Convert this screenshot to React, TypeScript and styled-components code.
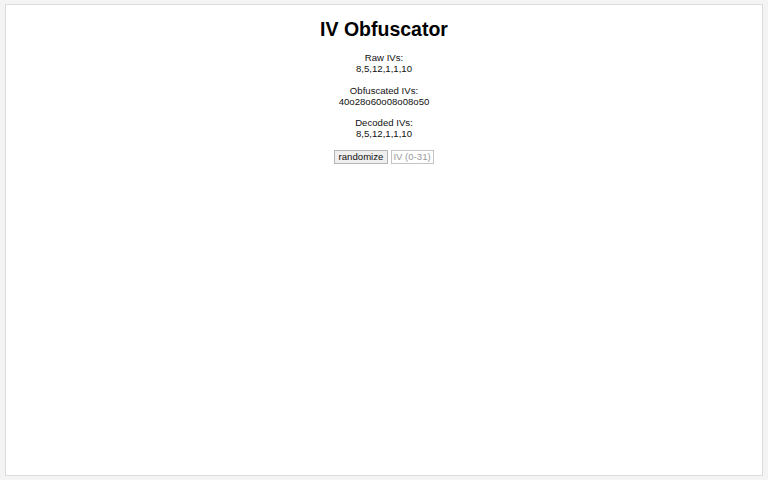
import React, { FC, useState } from 'react';
import styled, { createGlobalStyle } from 'styled-components';

const GlobalStyle = createGlobalStyle`
  html, body {
    margin: 0;
    padding: 0;
    background: #f4f4f4;
  }
  body {
    padding: 4px 5px 4px 5px;
    font-family: "Liberation Sans", Arial, sans-serif;
    color: #111;
  }
`;

const Panel = styled.div`
  box-sizing: border-box;
  height: 472px;
  background: white;
  border: 1px solid #dcdcdc;
  display: flex;
  flex-direction: column;
  align-items: center;
`;

const Title = styled.h1`
  font-size: 19.5px;
  font-weight: bold;
  margin: 13px 0 11px 0;
  color: #000;
`;

const Block = styled.div`
  font-size: 9.6px;
  line-height: 11px;
  text-align: center;
  margin-bottom: 10.5px;
  &:last-of-type {
    margin-bottom: 7px;
  }
`;

const Controls = styled.div`
  display: flex;
  gap: 3px;
`;

const Button = styled.button`
  font-family: "Liberation Sans", Arial, sans-serif;
  font-size: 9.6px;
  height: 14px;
  padding: 0 4px;
  background: #efefef;
  border: 1px solid #b5b5b5;
  color: #111;
`;

const Input = styled.input`
  font-family: "Liberation Sans", Arial, sans-serif;
  font-size: 9.6px;
  height: 14px;
  width: 43px;
  box-sizing: border-box;
  padding: 0 1px;
  border: 1px solid #c4c4c4;
  &::placeholder {
    color: #9a9a9a;
  }
`;

interface IField {
  label: string;
  value: string;
}

const Field: FC<IField> = (props) => {
  return (
    <Block>
      <div>{props.label}</div>
      <div>{props.value}</div>
    </Block>
  );
};

export default function App() {
  const [iv, setIv] = useState('');
  return (
    <>
      <GlobalStyle />
      <Panel>
        <Title>IV Obfuscator</Title>
        <Field label="Raw IVs:" value="8,5,12,1,1,10" />
        <Field label="Obfuscated IVs:" value="40o28o60o08o08o50" />
        <Field label="Decoded IVs:" value="8,5,12,1,1,10" />
        <Controls>
          <Button>randomize</Button>
          <Input placeholder="IV (0-31)" value={iv} onChange={(e) => setIv(e.target.value)} />
        </Controls>
      </Panel>
    </>
  );
}
